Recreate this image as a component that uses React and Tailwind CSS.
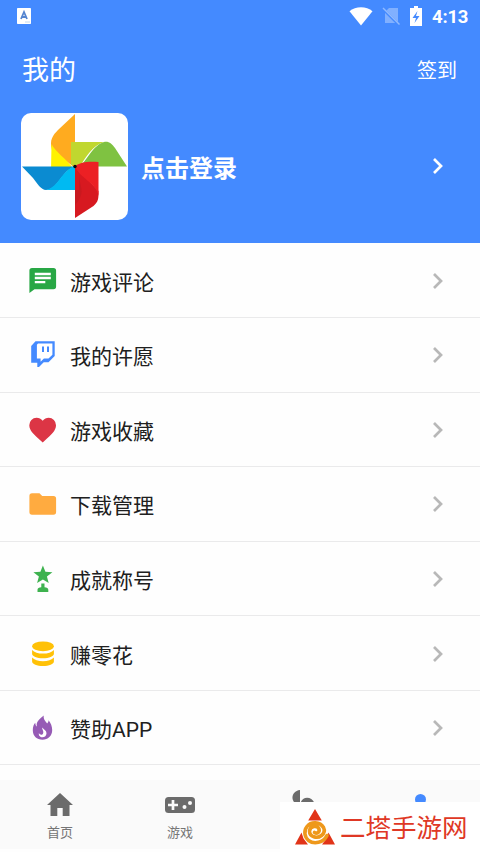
import React from "react";

const Icon = ({ children }) => (
  <svg viewBox="0 0 30 30" className="ml-7 mr-3 h-[30px] w-[30px] shrink-0">{children}</svg>
);

const Chevron = ({ className }) => (
  <svg viewBox="0 0 12 18" className={`h-[18px] w-3 ${className}`} fill="none" stroke="currentColor" strokeWidth="2.7">
    <path d="M2 2 9 9 2 16" />
  </svg>
);

const rows = [
  {
    label: "游戏评论",
    icon: (
      <Icon>
        <path fill="#28a745" d="M4 2h21.500a2.600 2.600 0 0 1 2.600 2.600v16a2.600 2.600 0 0 1-2.600 2.600H6.500L1.400 27V4.600A2.600 2.600 0 0 1 4 2z" />
        <path stroke="#fff" strokeWidth="2.300" d="M6.800 8h16M6.800 12h16M6.800 16.200h10.500" />
      </Icon>
    ),
  },
  {
    label: "我的许愿",
    icon: (
      <Icon>
        <path fill="#448aff" d="M7.500 1.300h19.200v14.700l-6.200 6.300h-4.800L11 27H9.300v-4.200H3.200V6z" />
        <path fill="#fff" d="M10 3.600h14.400v11.100l-3.900 3.800h-4.600l-3.300 3.200v-3.200H8.900V4.700z" />
        <path stroke="#448aff" strokeWidth="2" d="M15 6.500v5.400M20 6.500v5.400" />
      </Icon>
    ),
  },
  {
    label: "游戏收藏",
    icon: (
      <Icon>
        <path fill="#dc3545" d="M14.700 27.500 12.800 25.800C6 19.600 1.300 15.500 1.300 10.200A7.200 7.200 0 0 1 8.600 2.800c2.300 0 4.600 1.100 6.100 2.900 1.500-1.800 3.700-2.900 6-2.900A7.300 7.300 0 0 1 28 10.200c0 5.300-4.600 9.400-11.400 15.600z" />
      </Icon>
    ),
  },
  {
    label: "下载管理",
    icon: (
      <Icon>
        <path fill="#ffab40" d="M4 4.300h7.500L14.200 7h11.300A2.600 2.600 0 0 1 28.100 9.600v13.500a2.600 2.600 0 0 1-2.600 2.600H4a2.600 2.600 0 0 1-2.600-2.600V6.900A2.600 2.600 0 0 1 4 4.300z" />
      </Icon>
    ),
  },
  {
    label: "成就称号",
    icon: (
      <Icon>
        <path fill="#3eb24f" d="m14.900 1.500 2.500 6.200 7 .5-5.500 4.300 1.800 6.500-5.800-3.600-5.800 3.600 1.800-6.500-5.500-4.300 7-.5zM13.300 19.600h3.200v3.600c2.400 0 3.800.9 3.800 2.600V28H9.500v-2.200c0-1.700 1.400-2.600 3.800-2.600z" />
      </Icon>
    ),
  },
  {
    label: "赚零花",
    icon: (
      <Icon>
        <ellipse cx="15" cy="7.300" rx="10.900" ry="4.900" fill="#ffc107" />
        <path fill="#ffc107" d="M4.100 11c2 2.500 6.200 3.600 10.900 3.600s8.900-1.100 10.900-3.600v3.700c0 2.600-4.900 4.600-10.900 4.600s-10.900-2-10.900-4.600zM4.100 18.600c2 2.500 6.200 3.600 10.900 3.600s8.900-1.100 10.900-3.600v3.900c0 2.600-4.900 4.600-10.900 4.600s-10.900-2-10.900-4.600z" />
      </Icon>
    ),
  },
  {
    label: "赞助APP",
    icon: (
      <Icon>
        <path fill="#965bb5" d="M15.800 2.500c-.7 3.700 1.600 5.500 3.300 8 1-.8 1.400-1.900 1.500-3.200 2.200 2.700 3.600 6.300 3.600 9.800 0 6-4.300 9.700-9.700 9.700-5.600 0-9.700-3.700-9.700-9.500 0-3.600 1-5.900 2.500-7.500 0 1.900.5 3.200 1.500 3.600C8 8.500 11.500 6 15.800 2.500z" />
        <path fill="#fff" d="M14.200 14.500c-.3 1.900 1.300 3 1.100 4.900-.1 1.200-.7 1.900-1.600 2.300-1.200.2-2.300-.4-2.800-1.700-.5 2.500 1.200 4.300 3.400 4.300 2.500 0 4.200-1.800 4.200-4.100 0-2.500-2.400-3.600-4.300-5.700z" />
      </Icon>
    ),
  },
];

const Pinwheel = () => (
  <svg viewBox="0 0 107 107" className="h-[107px] w-[107px] rounded-[10px] bg-white">
    <path fill="#ffab1f" d="M54 1v54L31 37c-3-10 1-15 6-20z" />
    <path fill="#fff200" d="M30.500 31c4 8 14 14 22 25-8 3-16 3-22.500 1z" />
    <path fill="#c0d72f" d="M50 29h33c-12 4-17 14-24 24l-9-1z" />
    <path fill="#7fc241" d="M58 53.500c9-6 12-20 25-24.500 5-1 8 2 11 6l12 18.500z" />
    <path fill="#0b8bd1" d="M1 53.500h53C40 58 37 77 25 77c-5 0-9-7-13-12z" />
    <path fill="#00baf2" d="M25 77c13-3 15-19 29-24 5 5 6 13 4 24z" />
    <path fill="#d71920" d="M54 105V53l23.500 25c0 8 0 10-5 15z" />
    <path fill="#ec2024" d="M54 53c5-4 14-5 23.500-4v34C76 70 58 65 54 53z" />
    <path fill="#c9191f" d="M58 61c0 12 8 18-4 31V77h4z" />
    <circle cx="54" cy="53.500" r="1.700" fill="#080b0b" />
  </svg>
);

export default function App() {
  return (
    <div className="relative flex h-[852px] w-[480px] flex-col overflow-hidden bg-[#fefefe] font-[Roboto,'Noto_Sans_CJK_SC',sans-serif]">
      <header className="flex h-[243px] shrink-0 flex-col bg-[#448aff] text-white">
        <div className="flex h-8 items-center pl-[17px] pr-[11px]">
          <svg viewBox="0 0 14 16" className="h-4 w-3.5">
            <rect width="14" height="16" rx=".7" fill="#fff" />
            <path d="m4 11 3-7 3 7M5 9h4" stroke="#5585d0" strokeWidth="1.800" fill="none" />
            <path d="M8 14h5" stroke="#c3d8ee" />
          </svg>
          <svg viewBox="0 0 26 20" className="ml-auto h-5 w-[26px]">
            <path fill="#fff" d="M1.500 5.200C7.500-.1 18.500-.1 24.500 5.200L13 19.500z" />
          </svg>
          <svg viewBox="0 0 20 20" className="ml-2 h-5 w-5">
            <path fill="#81b0ff" d="M7 2h9v15H3V6z" />
            <path d="m1 3 16 16" stroke="#448aff" strokeWidth="2.500" />
            <path d="m1 2 16.500 16.500" stroke="#90baff" strokeWidth="1.400" />
          </svg>
          <svg viewBox="0 0 14 20" className="ml-[7px] h-5 w-3.5">
            <path fill="#fff" d="M5 0h4v2h4v18H1V2h4z" />
            <path fill="#448aff" d="M8.500 5 3.500 12H7l-1.500 5 5-7H7z" />
          </svg>
          <span className="ml-[9px] mt-0.5 w-[37px] text-[18.500px] font-bold leading-5 tracking-[-0.2px]">4:13</span>
        </div>
        <div className="flex h-[76px] items-center justify-between pl-[22px] pr-[23px] pt-[2px]">
          <h1 className="text-[27px] leading-8">我的</h1>
          <span className="text-[20px] leading-6">签到</span>
        </div>
        <div className="flex h-[116px] items-center pl-[21px] pr-[36px]">
          <Pinwheel />
          <strong className="ml-[13px] mt-[5px] text-[24px] font-bold leading-8">点击登录</strong>
          <Chevron className="ml-auto" />
        </div>
      </header>
      <main className="mt-[0.5px] grid h-[522px] shrink-0 grid-rows-7 text-[#202020]">
        {rows.map(({ label, icon }) => (
          <div key={label} className="flex items-center border-b border-[#eaeaeb] pr-[36px] pt-[1px]">
            {icon}
            <span className="mt-[4px] text-[21px] leading-8">{label}</span>
            <Chevron className="ml-auto text-[#b8b8b8]" />
          </div>
        ))}
      </main>
      <nav className="mt-[14px] grid h-[69px] grid-cols-4 bg-[#fafafa] text-[13px] text-[#757575]">
        <div className="flex flex-col items-center pt-[9px]">
          <svg viewBox="0 0 30 30" className="h-[30px] w-[30px]">
            <path fill="#6b6b6b" d="M15 4 28 16h-3.500v11h-6.800v-8h-5.400v8H5.500V16H2z" />
          </svg>
          <span className="mt-1 leading-5">首页</span>
        </div>
        <div className="flex flex-col items-center pt-[9px]">
          <svg viewBox="0 0 30 30" className="h-[30px] w-[30px]">
            <rect y="8" width="30" height="16" rx="3.500" fill="#6b6b6b" />
            <path stroke="#fafafa" strokeWidth="2.700" d="M3 16h10M8 11v10" />
            <circle cx="19.500" cy="18" r="2" fill="#fafafa" />
            <circle cx="25" cy="14" r="2" fill="#fafafa" />
          </svg>
          <span className="mt-1 leading-5">游戏</span>
        </div>
        <div className="flex justify-center pt-[10.5px]">
          <svg viewBox="0 0 30 30" className="h-[30px] w-[30px]">
            <path fill="#6b6b6b" d="M15 0v15C5 14 5 1 15 0zM15.500 13c2-7 11-7 14 0z" />
          </svg>
        </div>
        <div className="flex justify-center pt-[14.5px]">
          <div className="h-[11px] w-[11px] rounded-full bg-[#448aff]" />
        </div>
      </nav>
      <div className="absolute bottom-0 right-0 flex h-[50px] w-[200px] items-center bg-white pl-[14px]">
        <svg viewBox="0 0 42 38" className="h-[38px] w-[42px]">
          <path fill="#e13418" d="m21 1 6.800 11.500H14.200zM7.500 24.500l2 6 4.500 6H1zM34.500 24.500 41 36.500H28l4.500-6z" />
          <path
            fill="none"
            stroke="#ee981b"
            strokeWidth="3.6"
            strokeLinecap="round"
            strokeLinejoin="round"
            d="M20.500 24.500c2.500 1.500 5.500-.5 4.500-3.500-1.500-4-9-3.500-9.500 2 0 6 7.500 8 12 4.500 2.500-2 3.500-5 2-8C26 13.500 17 13.500 13 18.500c-3.500 4.500-2.500 10.500 1.500 14 5.500 4 15 2.500 18.500-5"
          />
        </svg>
        <span className="ml-1 mt-[1px] whitespace-nowrap text-[25.500px] leading-9 text-[#df3825]">二塔手游网</span>
      </div>
    </div>
  );
}
